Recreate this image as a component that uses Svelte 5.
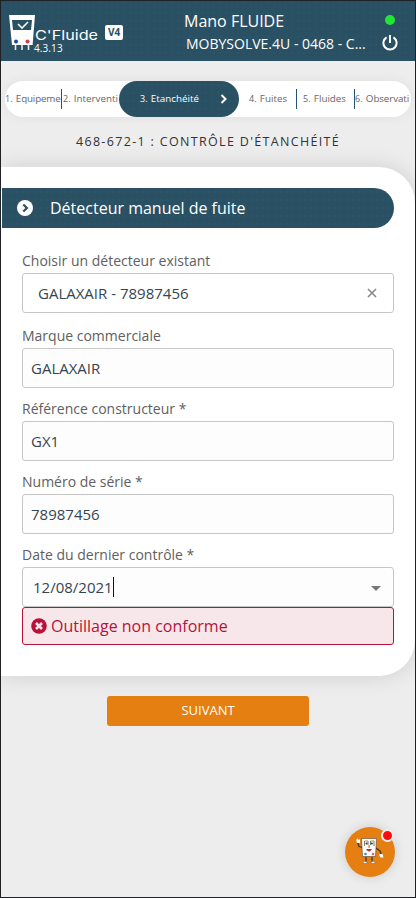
<script lang="ts">
  type Step = { num: number; label: string; size: string };

  const steps: Step[] = [
    { num: 1, label: "Equipeme", size: "first" },
    { num: 2, label: "Interventi", size: "second" },
    { num: 3, label: "Etanchéité", size: "current" },
    { num: 4, label: "Fuites", size: "fourth" },
    { num: 5, label: "Fluides", size: "fifth" },
    { num: 6, label: "Observati", size: "last" },
  ];

  let detector = $state("GALAXAIR - 78987456");
  let brand = $state("GALAXAIR");
  let reference = $state("GX1");
  let serial = $state("78987456");
  let lastCheck = $state("12/08/2021");
</script>

<div class="screen">
  <header class="header">
    <div class="brand">
      <svg class="brand-device" viewBox="0 0 26 36">
        <path d="M0 0h26l-2.400 30H3z" fill="#fff" />
        <path d="M3 5h20l-1 10H4z" fill="#2a5063" />
        <path d="M9 9l4 4 6-6" fill="none" stroke="#fff" stroke-width="1.600" />
        <circle cx="7" cy="26.500" r="2" fill="#1746b5" />
        <circle cx="18.500" cy="26.500" r="2" fill="#d2395b" />
        <path d="M6.500 30v5M13 30v5M19.500 30v5" stroke="#e8eef1" stroke-width="1.600" />
      </svg>
      <div class="brand-text">
        <svg class="brand-name" viewBox="0 0 64 16">
          <text x="0" y="13.500" textLength="63" lengthAdjust="spacingAndGlyphs">C'Fluide</text>
        </svg>
        <span class="version">4.3.13</span>
      </div>
      <span class="tag">V4</span>
    </div>
    <div class="account">
      <span class="user">Mano FLUIDE</span>
      <span class="company">MOBYSOLVE.4U - 0468 - C...</span>
    </div>
    <div class="status">
      <span class="online"></span>
      <svg class="power" viewBox="0 0 16 16" fill="none" stroke="#fff" stroke-width="2">
        <path d="M8 0v8" />
        <path d="M4.600 2.300a6.600 6.600 0 1 0 6.800 0" />
      </svg>
    </div>
  </header>

  <nav class="stepper">
    {#each steps as step (step.num)}
      <div class="step {step.size}">
        <span class="step-text">{step.num}. <b>{step.label}</b></span>
        {#if step.size === "current"}
          <svg class="chevron" viewBox="0 0 8 10"><path d="M1.500 1l4 4-4 4" /></svg>
        {/if}
      </div>
    {/each}
  </nav>

  <h1>468-672-1 : CONTRÔLE D'ÉTANCHÉITÉ</h1>

  <main class="card">
    <h2 class="section">
      <svg viewBox="0 0 16 16">
        <circle cx="8" cy="8" r="8" fill="#fff" />
        <path d="M6.300 4.500L9.900 8l-3.600 3.500" fill="none" stroke="#2a5063" stroke-width="2.200" />
      </svg>
      Détecteur manuel de fuite
    </h2>

    <div class="form">
      <div class="field select">
        <span class="label">Choisir un détecteur existant</span>
        <div class="control">
          <span>{detector}</span>
          <svg class="clear" viewBox="0 0 10 10"><path d="M1 1l8 8M9 1l-8 8" /></svg>
        </div>
      </div>
      <div class="field">
        <span class="label">Marque commerciale</span>
        <div class="control">{brand}</div>
      </div>
      <div class="field">
        <span class="label">Référence constructeur *</span>
        <div class="control">{reference}</div>
      </div>
      <div class="field">
        <span class="label">Numéro de série *</span>
        <div class="control">{serial}</div>
      </div>
      <div class="field date">
        <span class="label">Date du dernier contrôle *</span>
        <div class="control">
          <span class="typed">{lastCheck}</span>
          <span class="arrow"></span>
        </div>
      </div>
      <div class="alert">
        <svg viewBox="0 0 16 16">
          <circle cx="8" cy="8" r="7.800" fill="#b8123a" />
          <path d="M5 5l6 6M11 5l-6 6" stroke="#f7e7ea" stroke-width="2.600" />
        </svg>
        <span>Outillage non conforme</span>
      </div>
    </div>
  </main>

  <button class="next">SUIVANT</button>

  <button class="assistant" aria-label="Assistant">
    <svg viewBox="0 0 30 28">
      <path d="M9 11L4 9.500 2.500 5M21 11l4 3 1.500 4M11 20v5M17 20v5" fill="none" stroke="#48342a" stroke-width="1.300" />
      <path d="M1 2l1 1 .5-2 1 2 1.500-1v4H2zM24.500 17h3l1 4-1.500-1-1 1-1.500-2z" fill="#fff" />
      <path d="M6.500 1.500h15l-1 18h-13z" fill="#fff" stroke="#59412f" stroke-width=".6" />
      <path d="M9.500 4v5M13 4v4M15.500 4v4M19 4v5" stroke="#555" stroke-width=".8" />
      <path d="M9.500 4H13M15.500 4H19" stroke="#c08845" stroke-width="1" />
      <circle cx="11.500" cy="6.500" r="1" fill="#333" />
      <circle cx="16.800" cy="6.500" r="1" fill="#333" />
      <path d="M14.200 8v3" stroke="#e29031" stroke-width="1.500" />
      <path d="M11 12h6q-3 5-6 0" fill="#b62f34" />
      <circle cx="10.500" cy="17" r="1.300" fill="#2f8bcd" />
      <circle cx="18" cy="17" r="1.300" fill="#ed5876" />
      <path d="M8 26q1-3 4-1v1.500H8zM16 25q3-2 4 1v.5h-4z" fill="#fff" stroke="#59412f" stroke-width=".4" />
    </svg>
    <span class="alert-dot"></span>
  </button>
</div>

<style>
  :global(body) {
    background: #ededed;
  }
  .screen {
    position: relative;
    box-sizing: border-box;
    width: 416px;
    height: 898px;
    border: 1px solid #202124;
    background: #ededed;
    overflow: hidden;
    display: flex;
    flex-direction: column;
    font-family: "Open Sans", sans-serif;
    color: #444;
  }

  /* header */
  .header {
    display: flex;
    flex-shrink: 0;
    height: 60px;
    color: #fff;
  }
  .header, .section, .step.current {
    background-color: #2a5063;
    background-image: radial-gradient(circle, #315869 0.5px, transparent 1px);
    background-size: 6px 8px;
  }
  .brand {
    display: flex;
    box-sizing: border-box;
    width: 183px;
    padding-left: 8px;
  }
  .brand-device {
    width: 26px;
    height: 36px;
    margin-top: 14px;
    flex-shrink: 0;
  }
  .brand-text {
    display: flex;
    flex-direction: column;
    width: 64px;
    margin-top: 25px;
  }
  .brand-name {
    width: 64px;
    height: 16px;
  }
  .brand-name text {
    font-family: Inter, sans-serif;
    font-size: 13px;
    fill: #fff;
  }
  .version {
    font-size: 10px;
    line-height: 12px;
    letter-spacing: 0.1px;
    margin-left: -1px;
  }
  .tag {
    width: 18px;
    height: 15px;
    margin: 24px 0 0 6px;
    border-radius: 2px;
    background: #fff;
    color: #2a5063;
    font-size: 10px;
    line-height: 15px;
    font-weight: 700;
    text-align: center;
  }
  .account {
    display: flex;
    flex-direction: column;
    width: 193px;
    padding-top: 9px;
    white-space: nowrap;
  }
  .user {
    font-size: 16px;
    line-height: 22px;
  }
  .company {
    font-size: 14px;
    line-height: 24px;
    padding-left: 2px;
  }
  .status {
    display: flex;
    flex-direction: column;
    align-items: center;
    width: 26px;
    padding-top: 14px;
    gap: 10px;
  }
  .online {
    width: 10px;
    height: 10px;
    border-radius: 50%;
    background: #20e634;
  }
  .power {
    width: 16px;
    height: 16px;
  }

  /* stepper */
  .stepper {
    display: flex;
    flex-shrink: 0;
    height: 36px;
    margin: 20px 4px 0;
    border-radius: 18px;
    background: #fff;
    box-shadow: 0 0 12px rgba(0, 0, 0, 0.06);
    overflow: hidden;
  }
  .step {
    display: flex;
    align-items: center;
    flex-shrink: 0;
    box-sizing: border-box;
    padding-bottom: 1px;
    font-size: 9px;
    color: #666;
    white-space: nowrap;
    word-spacing: 1px;
    background-repeat: no-repeat;
  }
  .step b {
    font-size: 9.8px;
    font-weight: 400;
  }
  .first { width: 57px; }
  .second { width: 57px; padding-left: 1px; }
  .first b { letter-spacing: -0.15px; }
  .first, .fourth, .fifth {
    background-image: linear-gradient(#235673, #235673);
    background-size: 1px 20px;
    background-position: right center;
  }
  .step.current {
    width: 120px;
    padding: 0 11px 1px 21px;
    justify-content: space-between;
    border-radius: 18px;
    color: #fff;
    background-repeat: repeat;
  }
  .fourth { width: 58px; padding-left: 10px; }
  .fifth { width: 58px; padding-left: 6px; }
  .last { width: 56px; }
  .last b { letter-spacing: -0.1px; }
  .chevron {
    width: 8px;
    height: 10px;
    fill: none;
    stroke: #fff;
    stroke-width: 2;
  }

  h1 {
    flex-shrink: 0;
    margin: 15px 0;
    font-size: 12.5px;
    line-height: 20px;
    font-weight: 400;
    letter-spacing: 1.33px;
    text-align: center;
    color: #333;
  }

  /* card */
  .card {
    flex-shrink: 0;
    box-sizing: border-box;
    height: 509px;
    padding: 21px 21px 0 1px;
    border-radius: 0 36px 36px 0;
    background: #fff;
    box-shadow: 0 0 22px rgba(0, 0, 0, 0.13);
  }
  .section {
    display: flex;
    align-items: center;
    gap: 17px;
    height: 40px;
    margin: 0;
    padding-left: 15px;
    border-radius: 0 20px 20px 0;
    color: #fff;
    font-size: 16px;
    font-weight: 400;
  }
  .section svg {
    width: 16px;
    height: 16px;
    margin-bottom: 1px;
  }
  .form {
    padding: 22px 0 0 20px;
  }
  .field {
    display: flex;
    flex-direction: column;
    height: 73px;
  }
  .select {
    box-sizing: border-box;
    height: 65px;
    padding-top: 1px;
  }
  .label {
    height: 33px;
    box-sizing: border-box;
    padding-top: 12px;
    font-size: 14px;
    line-height: 18px;
    color: #606060;
  }
  .select .label {
    height: 22px;
    padding-top: 1px;
  }
  .control {
    display: flex;
    align-items: center;
    justify-content: space-between;
    box-sizing: border-box;
    height: 40px;
    padding: 0 16px 0 8px;
    border: 1px solid #c6c6c6;
    border-radius: 3px;
    background: #fdfdfd;
    color: #344651;
    font-size: 15px;
  }
  .select .control {
    padding-left: 15px;
    background: #fff;
  }
  .clear {
    width: 10px;
    height: 10px;
    fill: none;
    stroke: #888;
    stroke-width: 1.6;
  }
  .date .control {
    padding: 0 12px 0 10px;
  }
  .typed {
    border-right: 1px solid #111;
    line-height: 20px;
  }
  .arrow {
    border: 5px solid transparent;
    border-top-color: #777;
    border-bottom: 0;
    margin-top: 2px;
  }
  .alert {
    display: flex;
    align-items: center;
    gap: 4px;
    box-sizing: border-box;
    height: 38px;
    padding: 0 0 1px 8px;
    border: 1px solid #b8123a;
    border-radius: 3px;
    background: #f7e7ea;
    color: #b8123a;
    font-size: 16px;
  }
  .alert svg {
    width: 16px;
    height: 16px;
  }

  .next {
    flex-shrink: 0;
    width: 202px;
    height: 30px;
    margin: 20px 0 0 106px;
    padding: 0 0 2px;
    border: none;
    border-radius: 3px;
    background: #e57f11;
    color: #fff;
    font-family: inherit;
    font-size: 13px;
  }

  /* floating assistant */
  .assistant {
    position: absolute;
    right: 20px;
    bottom: 20px;
    width: 50px;
    height: 50px;
    padding: 0;
    border: none;
    border-radius: 50%;
    background: #e57f11;
    box-shadow: 0 0 12px rgba(0, 0, 0, 0.15);
  }
  .assistant svg {
    display: block;
    width: 30px;
    height: 28px;
    margin: 0 0 2px 10px;
  }
  .alert-dot {
    position: absolute;
    top: 2px;
    right: 1px;
    width: 9px;
    height: 9px;
    border: 2px solid #f3eee9;
    border-radius: 50%;
    background: #fa0d0d;
  }
</style>
